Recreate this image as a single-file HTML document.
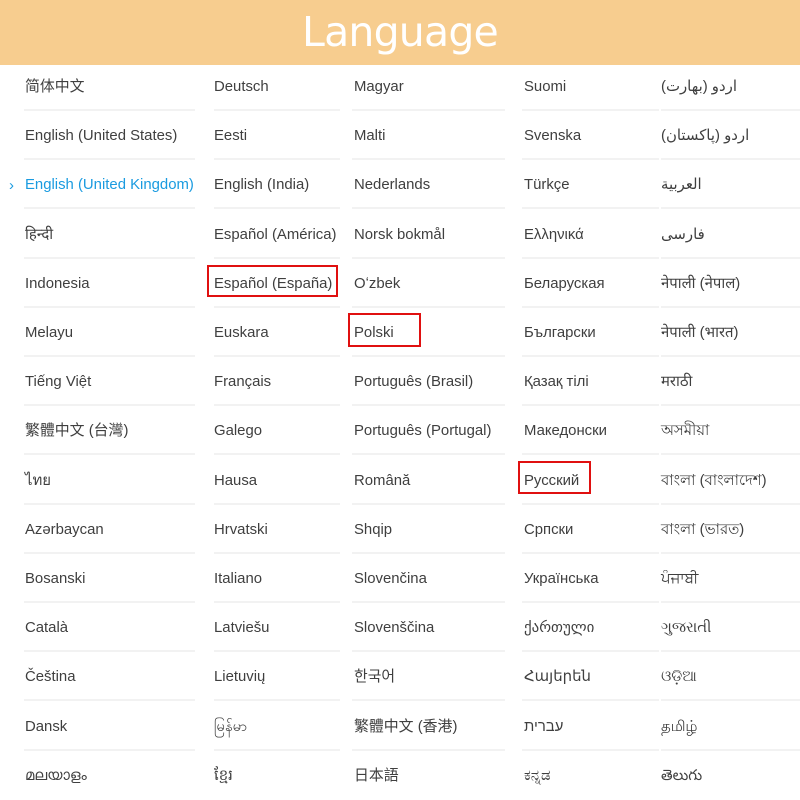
<!DOCTYPE html>
<html><head><meta charset="utf-8"><style>
body{margin:0;width:800px;height:800px;overflow:hidden;background:#fff;position:relative;font-family:"Liberation Sans","DejaVu Sans","Noto Sans CJK SC",sans-serif;}
.h{position:absolute;left:0;top:0;width:800px;height:65px;background:#f7cd8f;color:#fff;font-size:41px;text-align:center;line-height:64px;font-family:"DejaVu Sans","Liberation Sans",sans-serif;letter-spacing:-0.8px}
.c{position:absolute;font-size:14.9px;color:#3f3f3f;white-space:nowrap;line-height:20px}
.l{position:absolute;height:2px;background:#f2f2f2}
.r{position:absolute;border:2px solid #e01010}
.sel{color:#1a9be0}
</style></head><body>
<div class="h">Language</div>
<div id="g"></div>
<script>
var cols=[[25,24,195],[214,214,340],[354,352,505],[524,522,659],[661,661,800]];
var d=[
["简体中文","English (United States)","English (United Kingdom)","हिन्दी","Indonesia","Melayu","Tiếng Việt","繁體中文 (台灣)","ไทย","Azərbaycan","Bosanski","Català","Čeština","Dansk","മലയാളം"],
["Deutsch","Eesti","English (India)","Español (América)","Español (España)","Euskara","Français","Galego","Hausa","Hrvatski","Italiano","Latviešu","Lietuvių","မြန်မာ","ខ្មែរ"],
["Magyar","Malti","Nederlands","Norsk bokmål","Oʻzbek","Polski","Português (Brasil)","Português (Portugal)","Română","Shqip","Slovenčina","Slovenščina","한국어","繁體中文 (香港)","日本語"],
["Suomi","Svenska","Türkçe","Ελληνικά","Беларуская","Български","Қазақ тілі","Македонски","Русский","Српски","Українська","ქართული","Հայերեն","עברית","ಕನ್ನಡ"],
["اردو (بھارت)","اردو (پاکستان)","العربية","فارسی","नेपाली (नेपाल)","नेपाली (भारत)","मराठी","অসমীয়া","বাংলা (বাংলাদেশ)","বাংলা (ভারত)","ਪੰਜਾਬੀ","ગુજરાતી","ଓଡ଼ିଆ","தமிழ்","తెలుగు"]];
var h="";
for(var c=0;c<5;c++)for(var i=0;i<15;i++){var y=85+i*49.2;
h+='<div class="c'+(c==0&&i==2?' sel':'')+'" style="left:'+cols[c][0]+'px;top:'+(y-8)+'px">'+d[c][i]+'</div>';
if(i<14)h+='<div class="l" style="left:'+cols[c][1]+'px;width:'+(cols[c][2]-cols[c][1])+'px;top:'+(y+24)+'px"></div>';}
h+='<div class="c sel" style="left:9px;top:176px">›</div>';
h+='<div class="r" style="left:207px;top:265px;width:127px;height:28px"></div>';
h+='<div class="r" style="left:348px;top:313px;width:69px;height:30px"></div>';
h+='<div class="r" style="left:518px;top:461px;width:69px;height:29px"></div>';
document.getElementById("g").innerHTML=h;
</script>
</body></html>
